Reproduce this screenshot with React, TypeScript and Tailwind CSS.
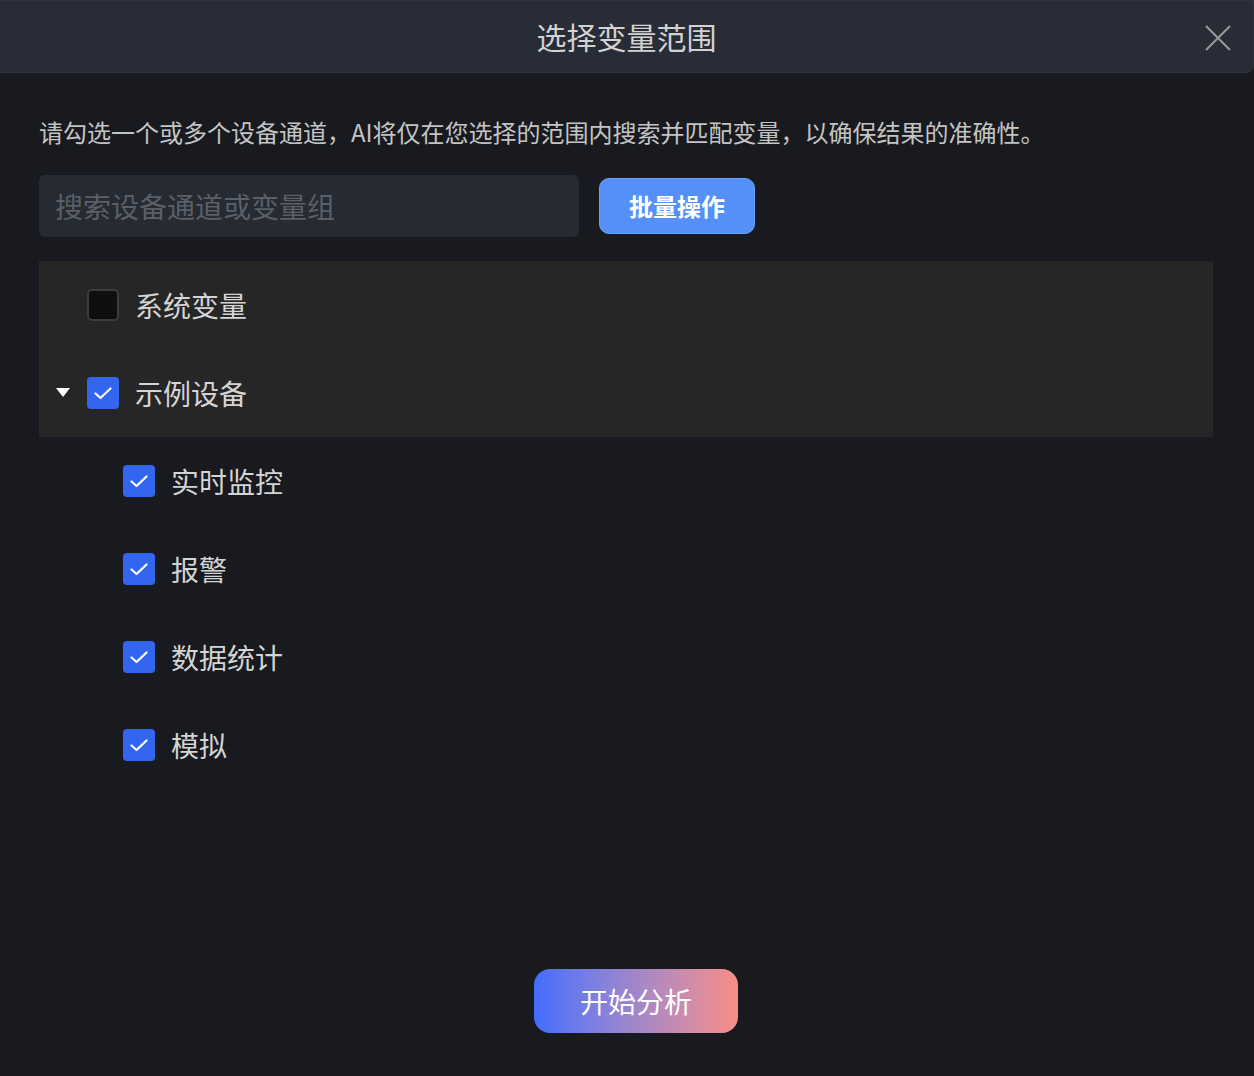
import React from "react";

const font = { fontFamily: '"Noto Sans CJK SC", "Noto Sans", sans-serif' };

function Check({ checked }: { checked: boolean }) {
  if (!checked) {
    return <div className="w-8 h-8 rounded-[5px] bg-[#0f0f0f] border-2 border-[#3c3c3c] shrink-0" />;
  }
  return (
    <div className="w-8 h-8 rounded-[4px] bg-[#3366ee] flex items-center justify-center shrink-0">
      <svg width="20" height="20" viewBox="0 0 20 20" fill="none">
        <path d="M2.5 10.5 L7.5 15 L17.5 5.5" stroke="white" strokeWidth="2.2" strokeLinecap="round" strokeLinejoin="round" />
      </svg>
    </div>
  );
}

function Row({ label, checked, indent, caret }: { label: string; checked: boolean; indent: boolean; caret?: boolean }) {
  return (
    <div className={`h-[88px] flex items-center ${indent ? "pl-[84px]" : "pl-[48px]"}`}>
      {caret && (
        <div className="-ml-[31px] mr-[17px] w-[14px] flex items-center">
          <svg width="14" height="10" viewBox="0 0 14 10">
            <path d="M0 0 L14 0 L7 9 Z" fill="white" />
          </svg>
        </div>
      )}
      <Check checked={checked} />
      <span className="ml-4 text-[28px] text-[#d4d4d4] leading-none">{label}</span>
    </div>
  );
}

export default function App() {
  return (
    <div className="w-[1254px] h-[1076px] bg-[#181a1f] flex flex-col" style={font}>
      <div className="h-[73px] bg-[#282c36] border-t border-r border-b border-[#30343e] rounded-br-lg relative flex items-center justify-center shrink-0">
        <span className="text-[30px] text-[#d2d2d2]">选择变量范围</span>
        <svg className="absolute right-[22px] top-[24px]" width="26" height="26" viewBox="0 0 26 26">
          <path d="M1 1 L25 25 M25 1 L1 25" stroke="#9a9a9a" strokeWidth="2" />
        </svg>
      </div>
      <div className="px-[39px] pt-[42px] flex flex-col">
        <p className="text-[24px] leading-[34px] text-[#c4c4c4]">
          请勾选一个或多个设备通道，AI将仅在您选择的范围内搜索并匹配变量，以确保结果的准确性。
        </p>
        <div className="mt-[26px] flex items-center gap-5">
          <div className="w-[540px] h-[62px] rounded-md bg-[#252a33] flex items-center px-4">
            <span className="text-[28px] text-[#5b5f67]">搜索设备通道或变量组</span>
          </div>
          <button className="w-[156px] h-[56px] rounded-[10px] bg-[#5590f8] border border-[#6aa0ff] text-white text-[24px] font-bold">
            批量操作
          </button>
        </div>
        <div className="mt-6 mr-[2px] flex flex-col">
          <div className="bg-[#262626]">
            <Row label="系统变量" checked={false} indent={false} />
            <Row label="示例设备" checked={true} indent={false} caret />
          </div>
          <Row label="实时监控" checked indent />
          <Row label="报警" checked indent />
          <Row label="数据统计" checked indent />
          <Row label="模拟" checked indent />
        </div>
      </div>
      <div className="flex-1" />
      <div className="flex justify-center pl-[18px] pb-[43px]">
        <button className="w-[204px] h-[64px] rounded-2xl bg-gradient-to-r from-[#416cff] to-[#f98c86] text-white text-[28px]">
          开始分析
        </button>
      </div>
    </div>
  );
}
